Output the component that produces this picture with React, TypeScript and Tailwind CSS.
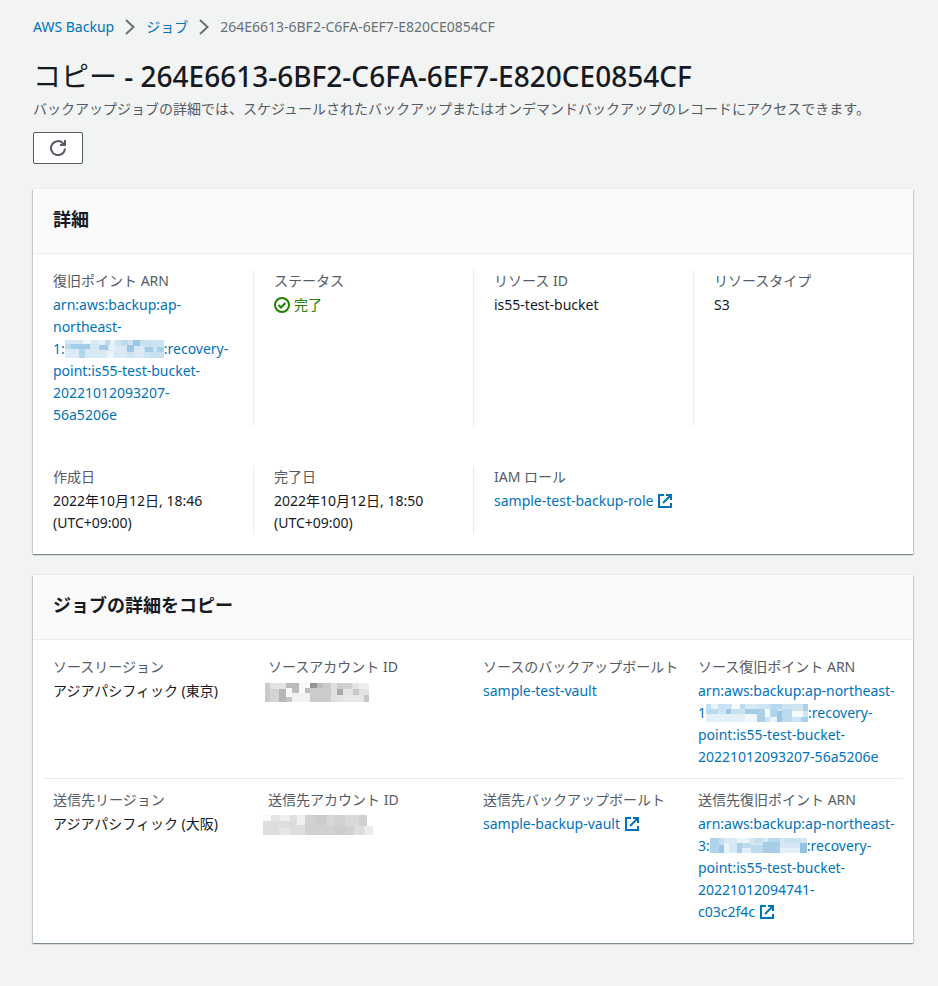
import React from "react";

type Cell = [x: number, y: number, w: number, h: number, fill: string];

const FONT = "font-['Noto_Sans','Noto_Sans_CJK_JP',sans-serif]";

function Mosaic({ width, height, cells, className = "" }: { width: number; height: number; cells: Cell[]; className?: string }) {
  return (
    <svg
      width={width}
      height={height}
      viewBox={`0 0 ${width} ${height}`}
      shapeRendering="crispEdges"
      aria-hidden="true"
      className={`inline-block ${className}`}
    >
      {cells.map(([x, y, w, h, fill], i) => (
        <rect key={i} x={x} y={y} width={w} height={h} fill={fill} />
      ))}
    </svg>
  );
}

const recoveryCells: Cell[] = [
  [0, 0, 99, 18, "#d5e7f3"],
  [18, 0, 8, 4, "#f1f8fc"],
  [26, 0, 8, 4, "#d9eaf4"],
  [34, 0, 6, 10, "#e6f2f9"],
  [44, 0, 6, 10, "#e6f2f9"],
  [6, 4, 19, 5, "#a3cde7"],
  [0, 4, 6, 5, "#bddcee"],
  [0, 9, 14, 9, "#dcebf5"],
  [14, 9, 6, 9, "#b4d6ea"],
  [20, 9, 22, 9, "#d9e9f4"],
  [34, 5, 9, 5, "#a3cde7"],
  [40, 0, 5, 5, "#bddcee"],
  [42, 11, 7, 7, "#edf5fa"],
  [50, 0, 49, 18, "#cde3f1"],
  [56, 0, 7, 5, "#bbdaed"],
  [68, 0, 7, 6, "#9ac7e4"],
  [75, 0, 12, 5, "#c4dff0"],
  [62, 5, 7, 7, "#9ac7e4"],
  [50, 6, 12, 12, "#dae9f4"],
  [69, 6, 10, 12, "#dae9f4"],
  [80, 7, 8, 5, "#a3cde7"],
  [92, 7, 7, 5, "#a9d0e8"],
  [85, 12, 14, 6, "#c7e0f0"],
];

const sourceCells: Cell[] = [
  [0, 0, 102, 18, "#cde4f2"],
  [0, 0, 5, 5, "#c4dff0"],
  [5, 0, 12, 5, "#e8f3fa"],
  [0, 5, 12, 5, "#b9daed"],
  [12, 0, 8, 5, "#c9e2f1"],
  [20, 5, 5, 5, "#9bc8e5"],
  [26, 0, 8, 5, "#f4fafd"],
  [26, 5, 8, 5, "#c5e0f0"],
  [34, 0, 5, 5, "#bbdaed"],
  [39, 5, 12, 5, "#a3cde7"],
  [39, 0, 12, 5, "#d9eaf5"],
  [0, 10, 39, 8, "#e4f0f8"],
  [39, 10, 12, 8, "#f1f8fc"],
  [51, 5, 8, 13, "#a9d0e8"],
  [59, 5, 5, 8, "#f4fafd"],
  [64, 0, 12, 5, "#bbdaed"],
  [64, 5, 7, 8, "#b1d5ea"],
  [71, 7, 5, 11, "#9bc8e5"],
  [76, 5, 10, 13, "#bcdaed"],
  [86, 7, 11, 6, "#f4fafd"],
  [97, 0, 5, 7, "#a9d0e8"],
  [95, 13, 7, 5, "#a9d0e8"],
  [64, 13, 7, 5, "#eaf4fa"],
];

const targetCells: Cell[] = [
  [0, 0, 97, 15, "#d4e7f3"],
  [0, 0, 9, 15, "#aed3ea"],
  [9, 7, 5, 8, "#9bc8e5"],
  [9, 0, 5, 7, "#c5e0f0"],
  [14, 0, 12, 5, "#d9eaf5"],
  [14, 5, 5, 10, "#e9f3fa"],
  [19, 5, 8, 10, "#d5e8f4"],
  [27, 0, 12, 5, "#e9f3fa"],
  [27, 5, 5, 10, "#a9d0e8"],
  [32, 5, 9, 5, "#bcdbed"],
  [32, 10, 9, 5, "#e0eef7"],
  [44, 0, 9, 5, "#c5e0f0"],
  [41, 7, 12, 8, "#bcdbed"],
  [53, 4, 17, 11, "#a6cee7"],
  [58, 0, 12, 4, "#b9daed"],
  [70, 10, 20, 5, "#e5f1f8"],
  [90, 5, 7, 10, "#93c3e3"],
  [75, 0, 15, 5, "#c9e2f1"],
];

const sourceAccountCells: Cell[] = [
  [0, 0, 104, 19, "#e2e3e4"],
  [0, 0, 5, 19, "#c9cacb"],
  [5, 6, 9, 13, "#d2d4d5"],
  [14, 6, 7, 13, "#b4b5b7"],
  [21, 0, 13, 5, "#b9babc"],
  [21, 5, 6, 9, "#f8f8f8"],
  [27, 5, 7, 5, "#bcbdbe"],
  [34, 0, 11, 10, "#fafafa"],
  [40, 5, 5, 5, "#bdbebf"],
  [21, 14, 6, 5, "#c4c5c6"],
  [27, 10, 18, 9, "#f1f3f3"],
  [45, 0, 7, 5, "#949596"],
  [52, 0, 6, 5, "#bcbdbf"],
  [45, 5, 21, 14, "#cbcccd"],
  [58, 0, 8, 5, "#c9cacc"],
  [66, 0, 6, 19, "#dedfe0"],
  [72, 0, 6, 6, "#cdcecf"],
  [72, 6, 6, 6, "#a9aaac"],
  [78, 0, 9, 6, "#d1d2d3"],
  [88, 6, 6, 6, "#c7c8ca"],
  [94, 0, 10, 6, "#eeeeef"],
  [99, 12, 5, 7, "#c5c6c8"],
  [78, 12, 20, 7, "#e6e7e8"],
];

const targetAccountCells: Cell[] = [
  [0, 6, 104, 14, "#dcddde"],
  [0, 0, 8, 6, "#fafafa"],
  [8, 0, 9, 6, "#e3e4e4"],
  [17, 0, 10, 6, "#eeefef"],
  [27, 0, 7, 6, "#dedfe0"],
  [34, 0, 8, 10, "#f1f1f1"],
  [42, 0, 62, 20, "#d0d1d2"],
  [53, 0, 10, 10, "#cbccce"],
  [63, 0, 9, 11, "#d5d6d7"],
  [72, 12, 10, 8, "#cbccce"],
  [82, 0, 14, 11, "#d9dadb"],
  [16, 13, 11, 7, "#e5e5e6"],
  [91, 11, 13, 9, "#dcddde"],
  [101, 11, 9, 9, "#eaebeb"],
];

function Chevron() {
  return (
    <svg width="10" height="16" viewBox="0 0 10 16" fill="none" stroke="#687078" strokeWidth="2" aria-hidden="true">
      <path d="M1 1l7.5 7L1 15" />
    </svg>
  );
}

function ExternalIcon() {
  return (
    <svg width="14" height="14" viewBox="0 0 14 14" fill="none" stroke="currentColor" strokeWidth="2" aria-hidden="true" className="ml-[5px] inline-block align-[-2px]">
      <path d="M6 1H1v12h12V9" />
      <path d="M8 1h5v5M12.5 1.5L5 9" />
    </svg>
  );
}

function Link({ children }: { children: React.ReactNode }) {
  return (
    <a href="#" className="text-[#0073bb] hover:underline">
      {children}
    </a>
  );
}

function Lines({ items }: { items: React.ReactNode[] }) {
  return (
    <>
      {items.map((item, i) => (
        <span key={i} className="block h-[22px] whitespace-nowrap">
          {item}
        </span>
      ))}
    </>
  );
}

function Field({ label, className = "", children }: { label: string; className?: string; children: React.ReactNode }) {
  return (
    <div className={`min-w-0 ${className}`}>
      <dt className="mb-0.5 text-[#545b64]">{label}</dt>
      <dd className="text-[#16191f]">{children}</dd>
    </div>
  );
}

function Card({ title, children }: { title: string; children: React.ReactNode }) {
  return (
    <section className="bg-white shadow-[0_1px_1px_0_rgba(0,28,36,0.3),1px_1px_1px_0_rgba(0,28,36,0.15),-1px_1px_1px_0_rgba(0,28,36,0.15),0_-1px_0_0_#eaeded]">
      <header className="border-b border-[#eaeded] bg-[#fafafa] px-5 pt-4 pb-5">
        <h2 className="text-lg leading-7 font-bold text-[#16191f]">{title}</h2>
      </header>
      {children}
    </section>
  );
}

export default function App() {
  const divided = "border-l border-[#eaeded] px-5";
  return (
    <div lang="ja" className={`min-h-screen bg-[#f2f3f3] pt-4 pr-[25px] pb-10 pl-[33px] text-sm leading-[22px] text-[#16191f] ${FONT}`}>
      <nav aria-label="breadcrumb">
        <ol className="flex items-center gap-[11px]">
          <li><Link>AWS Backup</Link></li>
          <li aria-hidden="true"><Chevron /></li>
          <li><Link>ジョブ</Link></li>
          <li aria-hidden="true"><Chevron /></li>
          <li className="text-[#687078]">264E6613-6BF2-C6FA-6EF7-E820CE0854CF</li>
        </ol>
      </nav>

      <h1 className="mt-5 text-[28px] leading-9">
        コピー <span className="font-medium">- 264E6613-6BF2-C6FA-6EF7-E820CE0854CF</span>
      </h1>
      <p className="mt-1 text-[#545b64]">
        バックアップジョブの詳細では、スケジュールされたバックアップまたはオンデマンドバックアップのレコードにアクセスできます。
      </p>
      <button type="button" aria-label="更新" className="mt-3 flex h-8 w-[50px] items-center justify-center rounded-xs border border-[#545b64] bg-white text-[#545b64]">
        <svg width="16" height="16" viewBox="0 0 16 16" fill="none" stroke="currentColor" strokeWidth="2" aria-hidden="true">
          <path d="M15 8.5A7 7 0 1 1 13 3.2L14.5 5" />
          <path d="M10 5h5V0" />
        </svg>
      </button>

      <main className="mt-[25px] flex flex-col gap-[21px]">
        <Card title="詳細">
          <dl className="grid grid-cols-4 gap-y-10 pt-4 pb-5">
            <Field label="復旧ポイント ARN" className="px-5">
              <Link>
                <Lines
                  items={[
                    "arn:aws:backup:ap-",
                    "northeast-",
                    <>1:<Mosaic width={99} height={18} cells={recoveryCells} className="align-[-4px]" />:recovery-</>,
                    "point:is55-test-bucket-",
                    "20221012093207-",
                    "56a5206e",
                  ]}
                />
              </Link>
            </Field>
            <Field label="ステータス" className={divided}>
              <span className="flex items-center gap-1 text-[#1d8102]">
                <svg width="16" height="16" viewBox="0 0 16 16" fill="none" stroke="currentColor" strokeWidth="2" aria-hidden="true">
                  <circle cx="8" cy="8" r="7" />
                  <path d="M4.5 8L7 10.5 11.5 6" />
                </svg>
                完了
              </span>
            </Field>
            <Field label="リソース ID" className={divided}>is55-test-bucket</Field>
            <Field label="リソースタイプ" className={divided}>S3</Field>
            <Field label="作成日" className="px-5">
              <Lines items={["2022年10月12日, 18:46", "(UTC+09:00)"]} />
            </Field>
            <Field label="完了日" className={divided}>
              <Lines items={["2022年10月12日, 18:50", "(UTC+09:00)"]} />
            </Field>
            <Field label="IAM ロール" className={divided}>
              <span className="whitespace-nowrap"><Link>sample-test-backup-role<ExternalIcon /></Link></span>
            </Field>
          </dl>
        </Card>

        <Card title="ジョブの詳細をコピー">
          <div className="px-[10px] pt-4 pb-5">
            <dl className="grid grid-cols-4 border-b border-[#eaeded] pb-[10px]">
              <Field label="ソースリージョン" className="pl-[10px]">アジアパシフィック (東京)</Field>
              <Field label="ソースアカウント ID" className="pl-[10px]">
                <Mosaic width={104} height={19} cells={sourceAccountCells} className="-ml-[3px] align-middle" />
              </Field>
              <Field label="ソースのバックアップボールト" className="pl-[10px]"><Link>sample-test-vault</Link></Field>
              <Field label="ソース復旧ポイント ARN" className="pl-[10px]">
                <Link>
                  <Lines
                    items={[
                      "arn:aws:backup:ap-northeast-",
                      <>1<Mosaic width={102} height={18} cells={sourceCells} className="align-[-4px]" />:recovery-</>,
                      "point:is55-test-bucket-",
                      "20221012093207-56a5206e",
                    ]}
                  />
                </Link>
              </Field>
            </dl>
            <dl className="grid grid-cols-4 pt-[10px]">
              <Field label="送信先リージョン" className="pl-[10px]">アジアパシフィック (大阪)</Field>
              <Field label="送信先アカウント ID" className="pl-[10px]">
                <Mosaic width={110} height={20} cells={targetAccountCells} className="-ml-[5px] align-middle" />
              </Field>
              <Field label="送信先バックアップボールト" className="pl-[10px]">
                <Link>sample-backup-vault<ExternalIcon /></Link>
              </Field>
              <Field label="送信先復旧ポイント ARN" className="pl-[10px]">
                <Link>
                  <Lines
                    items={[
                      "arn:aws:backup:ap-northeast-",
                      <>3:<Mosaic width={97} height={15} cells={targetCells} className="align-[-2px]" />:recovery-</>,
                      "point:is55-test-bucket-",
                      "20221012094741-",
                      <>c03c2f4c<ExternalIcon /></>,
                    ]}
                  />
                </Link>
              </Field>
            </dl>
          </div>
        </Card>
      </main>
    </div>
  );
}
